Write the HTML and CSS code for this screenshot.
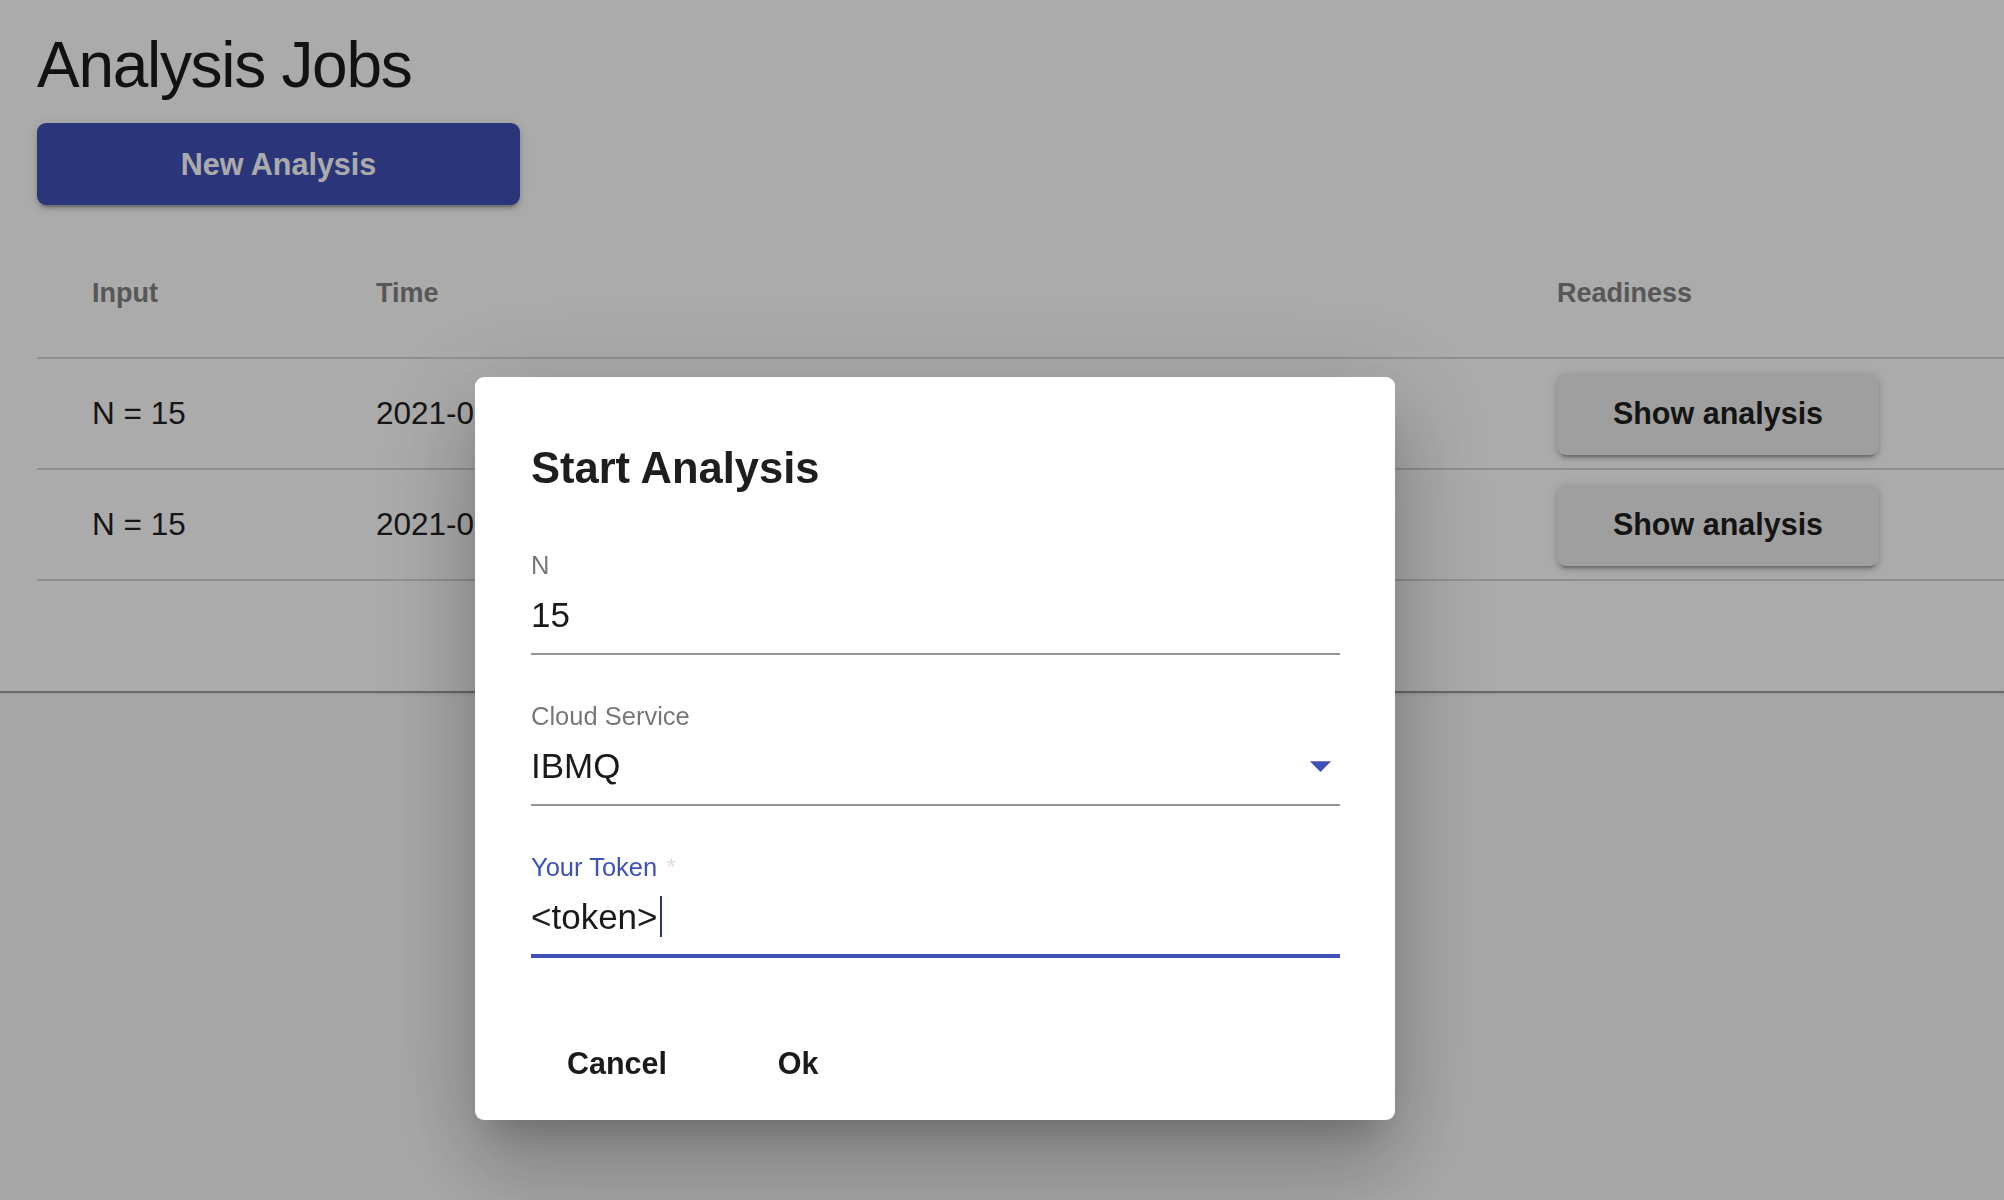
FILE: index.html
```html
<!DOCTYPE html>
<html lang="en">
<head>
<meta charset="utf-8">
<title>Analysis Jobs</title>
<link rel="stylesheet" href="styles.css">
</head>
<body>
<div class="paper">
  <h1 class="page-title">Analysis Jobs</h1>
  <button class="btn-primary" type="button">New Analysis</button>
  <div class="jobs-table">
    <div class="row head">
      <div class="cell">Input</div>
      <div class="cell">Time</div>
      <div class="cell">Readiness</div>
    </div>
    <div class="row">
      <div class="cell">N = 15</div>
      <div class="cell">2021-06-12 10:24</div>
      <div class="cell"><button class="btn-default" type="button">Show analysis</button></div>
    </div>
    <div class="row">
      <div class="cell">N = 15</div>
      <div class="cell">2021-06-12 10:31</div>
      <div class="cell"><button class="btn-default" type="button">Show analysis</button></div>
    </div>
  </div>
</div>

<div class="dialog-root">
  <div class="backdrop"></div>
  <div class="dialog">
    <h2 class="dialog-title">Start Analysis</h2>
    <div class="field">
      <div class="field-label">N</div>
      <div class="field-input">15</div>
    </div>
    <div class="field">
      <div class="field-label">Cloud Service</div>
      <div class="field-input select">
        <span class="select-value">IBMQ</span>
        <svg class="select-arrow" viewBox="0 0 24 24" width="51" height="51" aria-hidden="true"><path d="M7 10l5 5 5-5z" fill="#3f51b5"/></svg>
      </div>
    </div>
    <div class="field focused">
      <div class="field-label">Your Token<span class="req">*</span></div>
      <div class="field-input">&lt;token&gt;<span class="caret"></span></div>
    </div>
    <div class="dialog-actions">
      <button class="btn-text" type="button">Cancel</button>
      <button class="btn-text" type="button">Ok</button>
    </div>
  </div>
</div>
</body>
</html>
```

FILE: styles.css
```css
html, body {
  margin: 0;
  padding: 0;
}

body {
  width: 2004px;
  height: 1200px;
  overflow: hidden;
  background: #fafafa;
  font-family: "Liberation Sans", Arial, Helvetica, sans-serif;
  color: #212121;
}

.paper {
  background: #ffffff;
  padding: 29px 0 110px 37px;
  box-shadow: 0 2px 0 rgba(0, 0, 0, 0.3), 0 3px 3px rgba(0, 0, 0, 0.12);
}

.page-title {
  margin: 0 0 22px 0;
  font-size: 64px;
  line-height: 72px;
  font-weight: 400;
  letter-spacing: -1.3px;
  color: #1c1c1c;
}

.btn-primary {
  display: flex;
  align-items: center;
  justify-content: center;
  width: 483px;
  height: 82px;
  border: 0;
  border-radius: 9px;
  background: #3f51b5;
  color: #ffffff;
  font-family: inherit;
  font-size: 30.5px;
  font-weight: 700;
  padding: 0;
  box-shadow: 0 6px 2px -4px rgba(0, 0, 0, 0.2), 0 4px 4px rgba(0, 0, 0, 0.14), 0 2px 11px rgba(0, 0, 0, 0.12);
}

.jobs-table {
  margin-top: 24px;
}

.row {
  display: grid;
  grid-template-columns: 284px 1181px 1fr;
  height: 109px;
  border-bottom: 2px solid #d6d6d6;
  align-items: center;
}

.row.head {
  height: 128px;
}

.cell {
  padding-left: 55px;
  font-size: 31.5px;
  color: #222222;
  white-space: nowrap;
}

.row.head .cell {
  font-size: 27px;
  font-weight: 700;
  color: #828282;
}

.btn-default {
  display: flex;
  align-items: center;
  justify-content: center;
  width: 322px;
  height: 82px;
  border: 0;
  border-radius: 9px;
  background: #eeeeee;
  color: #1f1f1f;
  font-family: inherit;
  font-size: 30.5px;
  font-weight: 700;
  padding: 0;
  box-shadow: 0 6px 2px -4px rgba(0, 0, 0, 0.2), 0 4px 4px rgba(0, 0, 0, 0.14), 0 2px 11px rgba(0, 0, 0, 0.12);
}

/* dialog */
.dialog-root {
  position: fixed;
  inset: 0;
  z-index: 10;
}

.backdrop {
  position: absolute;
  inset: 0;
  background: rgba(0, 0, 0, 0.33);
}

.dialog {
  position: absolute;
  left: 475px;
  top: 377px;
  width: 920px;
  height: 743px;
  box-sizing: border-box;
  padding: 65px 55px 15px 56px;
  background: #ffffff;
  border-radius: 9px;
  box-shadow: 0 25px 34px -16px rgba(0, 0, 0, 0.2), 0 54px 86px 7px rgba(0, 0, 0, 0.14), 0 20px 104px 18px rgba(0, 0, 0, 0.12);
}

.dialog-title {
  margin: 0 0 56px 0;
  font-size: 43.5px;
  line-height: 52px;
  font-weight: 700;
  color: #1e1e1e;
}

.field + .field {
  margin-top: 46px;
}

.field-label {
  font-size: 25.5px;
  line-height: 30px;
  color: rgba(0, 0, 0, 0.54);
}

.field-input {
  margin-top: 13px;
  height: 44px;
  font-size: 35px;
  line-height: 44px;
  padding-bottom: 16px;
  border-bottom: 2px solid rgba(0, 0, 0, 0.42);
  color: #1a1a1a;
}

.field-input.select {
  display: flex;
  align-items: center;
}

.select-value {
  flex: 1;
}

.select-arrow {
  display: block;
  flex: none;
  margin: -4px -6px -3px 0;
}

.field.focused .field-label {
  color: #3f51b5;
}

.req {
  margin-left: 9px;
  color: rgba(0, 0, 0, 0.13);
}

.field.focused .field-input {
  padding-bottom: 15px;
  border-bottom: 4px solid #3f51b5;
}

.caret {
  display: inline-block;
  width: 2px;
  height: 41px;
  margin-left: 2px;
  background: #2c3470;
  vertical-align: -8px;
}

.dialog-actions {
  display: flex;
  gap: 37px;
  margin-top: 64px;
  padding-left: 14px;
}

.btn-text {
  display: flex;
  align-items: center;
  justify-content: center;
  min-width: 144px;
  height: 82px;
  padding: 0 18px;
  border: 0;
  background: transparent;
  color: #1a1a1a;
  font-family: inherit;
  font-size: 30.5px;
  font-weight: 700;
}
```
